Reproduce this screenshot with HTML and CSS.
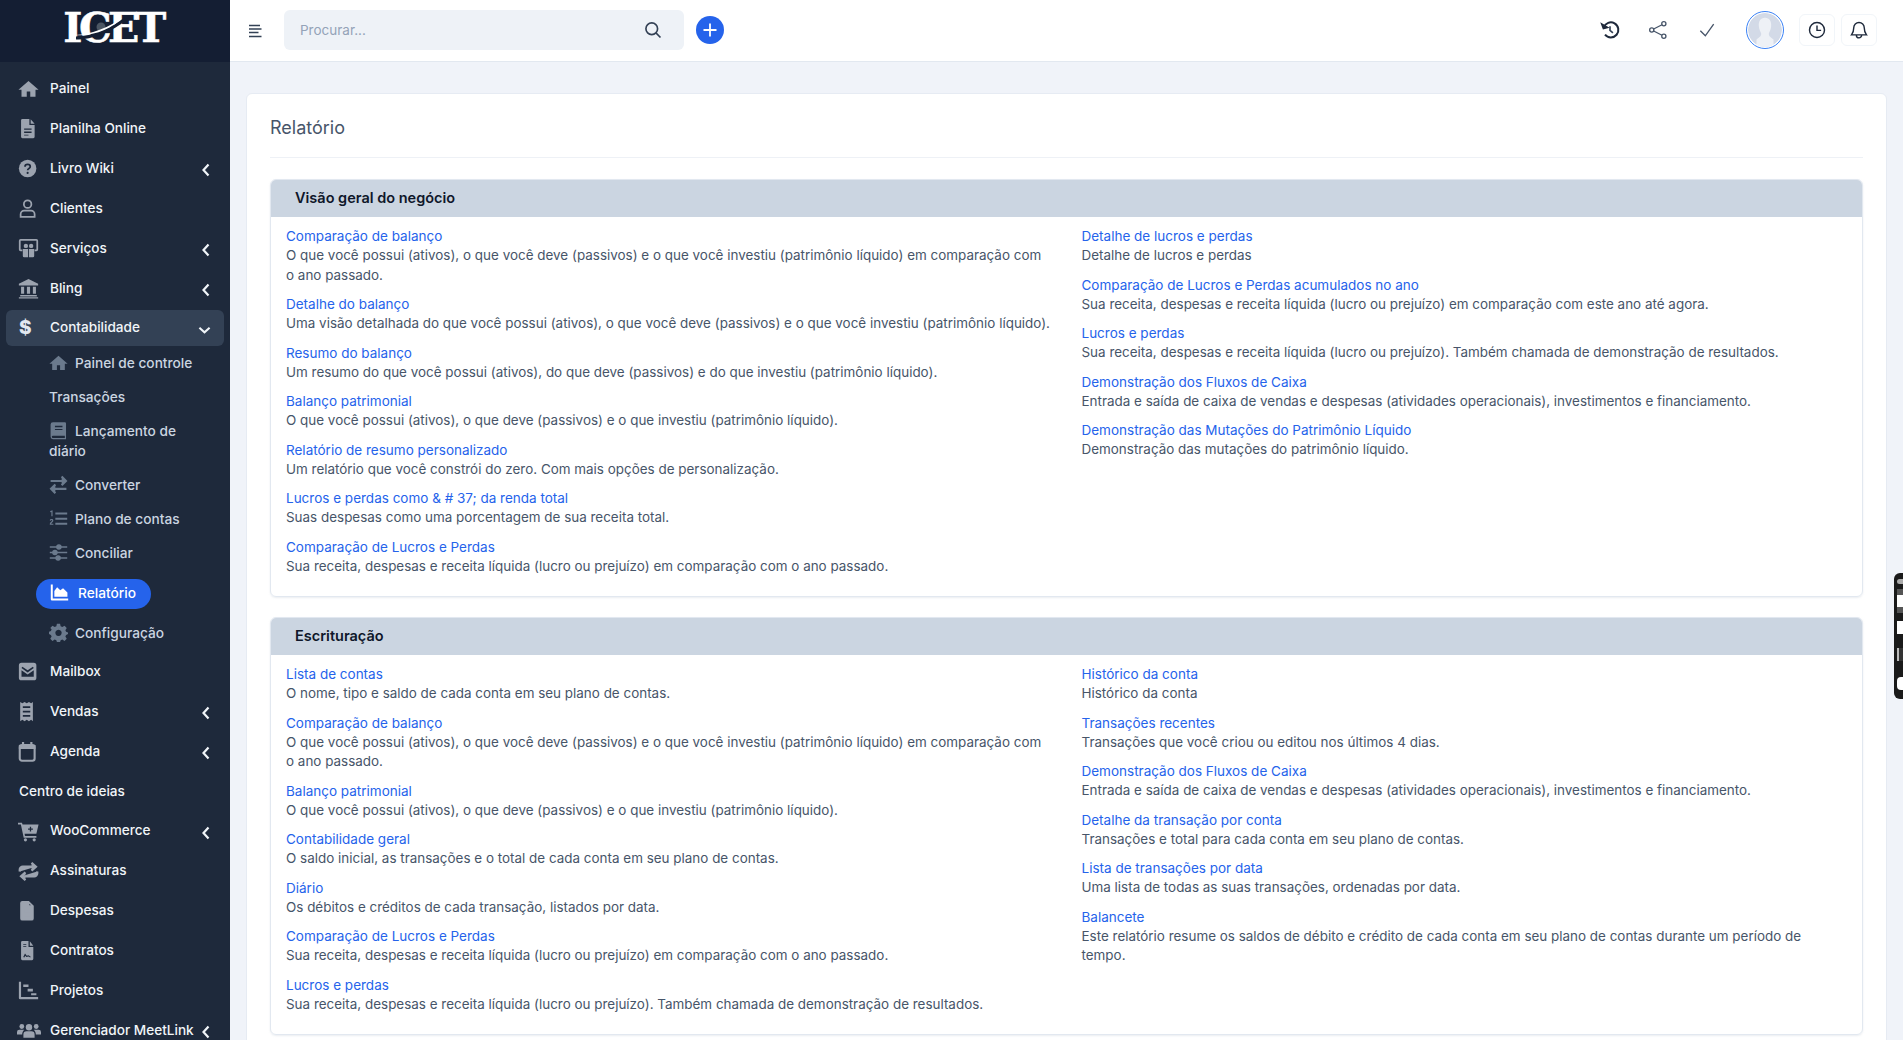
FILE: index.html
```html
<!DOCTYPE html>
<html lang="pt-BR">

<head>
  <meta charset="UTF-8" />
  <meta name="viewport" content="width=device-width, initial-scale=1.0" />
  <title>Relatório</title>
  <link rel="stylesheet" href="styles.css">
</head>

<body>
  <aside class="sidebar">
    <div class="logo">
      <span class="logo-text">ICET</span>
      <svg class="logo-orbit" viewBox="0 0 60 34"><circle cx="26" cy="18" r="4.500" fill="#4b5563"/><path d="M1 29C18 29 38 20 50 10" fill="none" stroke="#141e33" stroke-width="3"/><path d="M0 26C16 26 36 17 47 9C38 19 18 28 0 26Z" fill="#fff"/></svg>
    </div>
    <nav class="nav">
      <a class="nav-item"><svg class="nav-icon" viewBox="0 0 24 24"><path d="M12 3.500 0.500 13.500H4V21.500H10V15.500H14V21.500H20V13.500H23.500Z"/></svg>Painel</a>
      <a class="nav-item"><svg class="nav-icon" viewBox="0 0 24 24"><path fill-rule="evenodd" d="M5 1H13V8H19V21.500A1.500 1.500 0 0 1 17.500 23H5A1.500 1.500 0 0 1 3.500 21.500V2.500A1.500 1.500 0 0 1 5 1ZM14.500 1.500 19 6.500H14.500ZM7 12V13.500H15.500V12ZM7 15.500V17H15.500V15.500ZM7 19V20H12V19Z"/></svg>Planilha Online</a>
      <a class="nav-item"><svg class="nav-icon" viewBox="0 0 24 24"><circle cx="11" cy="12" r="10"/><path d="M8 10C8 6.500 14 6.500 14 10C14 12 11 12 11 14" fill="none" stroke="#1e293b" stroke-width="2"/><circle cx="11" cy="17" r="1.200" fill="#1e293b"/></svg>Livro Wiki<svg class="chevron" viewBox="0 0 8 14"><path d="M6.500 1.500 1.500 7l5 5.500"/></svg></a>
      <a class="nav-item"><svg class="nav-icon" viewBox="0 0 24 24"><circle cx="11" cy="7" r="4.300" fill="none" stroke="currentColor" stroke-width="2"/><path d="M3 21.500V18.500C3 16 5 14.500 7 14.500H15C17 14.500 19 16 19 18.500V21.500Z" fill="none" stroke="currentColor" stroke-width="2"/></svg>Clientes</a>
      <a class="nav-item"><svg class="nav-icon" viewBox="0 0 24 24"><path fill-rule="evenodd" d="M3 1H21A2 2 0 0 1 23 3V13A2 2 0 0 1 21 15H19V13H21V3H3V13H5V15H3A2 2 0 0 1 1 13V3A2 2 0 0 1 3 1Z"/><circle cx="9" cy="9" r="2.500"/><circle cx="15" cy="9" r="2.500"/><path d="M5.500 12.500H11.500V22H7A1.500 1.500 0 0 1 5.500 20.500ZM12.500 12.500H18.500V20.500A1.500 1.500 0 0 1 17 22H12.500Z"/></svg>Serviços<svg class="chevron" viewBox="0 0 8 14"><path d="M6.500 1.500 1.500 7l5 5.500"/></svg></a>
      <a class="nav-item"><svg class="nav-icon" viewBox="0 0 24 24"><path d="M12 1 23 6.500V8.500H1V6.500ZM3.500 10H7V18H3.500ZM10.200 10H13.800V18H10.200ZM17 10H20.500V18H17ZM2.500 19.500H21.500V21H2.500ZM1 22H23V23.500H1Z"/></svg>Bling<svg class="chevron" viewBox="0 0 8 14"><path d="M6.500 1.500 1.500 7l5 5.500"/></svg></a>
      <a class="nav-item is-open"><span class="nav-dollar">$</span>Contabilidade<svg class="chevron chevron-down" viewBox="0 0 14 8"><path d="M1.500 1.500 7 6.500l5.500-5"/></svg></a>
      <ul class="subnav">
        <li><a><svg class="sub-icon" viewBox="0 0 24 24"><path d="M12 3.500 0.500 13.500H4V21.500H10V15.500H14V21.500H20V13.500H23.500Z"/></svg>Painel de controle</a></li>
        <li><a>Transações</a></li>
        <li><a><svg class="sub-icon" viewBox="0 0 24 24"><path fill-rule="evenodd" d="M5 1.500H20A1.500 1.500 0 0 1 21.500 3V23H5A3 3 0 0 1 2 20V4.500A3 3 0 0 1 5 1.500ZM7.500 6V8H17V6ZM7.500 10V11.500H17V10ZM5 18.500A1.500 1.500 0 0 0 5 21.500H20V18.500Z"/></svg>Lançamento de diário</a></li>
        <li><a><svg class="sub-icon" viewBox="0 0 24 24" fill="none" stroke="currentColor" stroke-width="2.600"><path d="M2 8H21M16 2.500 21.500 8 16 13.500" transform="translate(0 -.5)"/><path d="M22 17H3M8 11.500 2.500 17 8 22.500" transform="translate(0 .5)"/></svg>Converter</a></li>
        <li><a><svg class="sub-icon" viewBox="0 0 24 24"><path d="M8 4.500H23V7H8ZM8 11H23V13.500H8ZM8 17.500H23V20H8ZM1.500 2.500 4.500 1.500V9H3V3.800L1.500 4.200ZM1 14.500C1 12 5.500 12 5.500 14.500C5.500 16 3 17.500 2.800 18.500H5.500V20H1V18.500C1.500 16.500 4 15.500 4 14.500C4 13.700 2.500 13.700 2.500 14.700Z"/></svg>Plano de contas</a></li>
        <li><a><svg class="sub-icon" viewBox="0 0 24 24" fill="none" stroke="currentColor" stroke-width="2"><path d="M1 5H10M15 5H23M1 12H5M10 12H23M1 19H9M14 19H23"/><circle cx="12.500" cy="5" r="2.500"/><circle cx="7.500" cy="12" r="2.500"/><circle cx="11.500" cy="19" r="2.500"/></svg>Conciliar</a></li>
        <li class="is-current"><a><svg class="sub-icon" viewBox="0 0 24 24"><path d="M1 2H3.500V19.500H23V22H2.500A1.500 1.500 0 0 1 1 20.500ZM5.500 17.500V10L9 5.500 13 9 16.500 6.500 22 12V17.500Z"/></svg>Relatório</a></li>
        <li><a><svg class="sub-icon" viewBox="0 0 24 24"><path fill-rule="evenodd" d="M10 1H14L14.700 4.200 16.800 5.100 19.600 3.400 22.400 6.200 20.700 9 21.600 11 24 12 24 14 21.600 15 20.700 17 22.400 19.800 19.600 22.600 16.800 20.900 14.700 21.800 14 24H10L9.300 21.800 7.200 20.900 4.400 22.600 1.600 19.800 3.300 17 2.400 15 0 14V11L2.400 10 3.300 8 1.600 6.200 4.400 3.400 7.200 5.100 9.300 4.200ZM12 8.500A4 4 0 1 0 12.010 8.500Z"/></svg>Configuração</a></li>
      </ul>
      <a class="nav-item"><svg class="nav-icon" viewBox="0 0 24 24"><path fill-rule="evenodd" d="M4 2H18A3 3 0 0 1 21 5V19A3 3 0 0 1 18 22H4A3 3 0 0 1 1 19V5A3 3 0 0 1 4 2ZM5 6.500 4 8 11 13 18 8 17 6.500 11 10.500ZM4 10.500V18H18V10.500L11 15.500Z"/></svg>Mailbox</a>
      <a class="nav-item"><svg class="nav-icon" viewBox="0 0 24 24"><path fill-rule="evenodd" d="M2.500 1 5 2.500 7.500 1 10 2.500 12.500 1 15 2.500 17 1V23L15 21.500 12.500 23 10 21.500 7.500 23 5 21.500 2.500 23ZM5.500 6V8H14V6ZM5.500 11V13H14V11ZM5.500 16V18H14V16Z"/></svg>Vendas<svg class="chevron" viewBox="0 0 8 14"><path d="M6.500 1.500 1.500 7l5 5.500"/></svg></a>
      <a class="nav-item"><svg class="nav-icon" viewBox="0 0 24 24"><rect x="2" y="4.500" width="17" height="18" rx="2.500" fill="none" stroke="currentColor" stroke-width="2.400"/><path d="M1 4.500H20V9H1ZM4.500 1H7V5H4.500ZM14 1H16.500V5H14Z"/></svg>Agenda<svg class="chevron" viewBox="0 0 8 14"><path d="M6.500 1.500 1.500 7l5 5.500"/></svg></a>
      <a class="nav-item nav-plain">Centro de ideias</a>
      <a class="nav-item"><svg class="nav-icon" viewBox="0 0 24 24"><path fill-rule="evenodd" d="M0 2H4.500L5.200 4H23.500L21 14.500H7.500L8 17H21V19H6.500L3.300 4H0ZM13.500 6.500V8.500H11.500V10H13.500V12H15V10H17V8.500H15V6.500Z"/><circle cx="8.500" cy="21.500" r="1.800"/><circle cx="18.500" cy="21.500" r="1.800"/></svg>WooCommerce<svg class="chevron" viewBox="0 0 8 14"><path d="M6.500 1.500 1.500 7l5 5.500"/></svg></a>
      <a class="nav-item"><svg class="nav-icon" viewBox="0 0 24 24" fill="none" stroke="currentColor" stroke-width="2.600"><path d="M2 12V10A3.500 3.500 0 0 1 5.500 6.500H20M15.500 2 20.500 6.500 15.500 11"/><path d="M22 12V14A3.500 3.500 0 0 1 18.500 17.500H4M8.500 13 3.500 17.500 8.500 22"/></svg>Assinaturas</a>
      <a class="nav-item"><svg class="nav-icon" viewBox="0 0 24 24" fill="none" stroke="currentColor" stroke-width="2"><path d="M5 2H12L17 7V21A1.500 1.500 0 0 1 15.500 22.500H5A1.500 1.500 0 0 1 3.500 21V3.500A1.500 1.500 0 0 1 5 2ZM12 2V7H17M7 12H14M7 15H14M7 18H14"/></svg>Despesas</a>
      <a class="nav-item"><svg class="nav-icon" viewBox="0 0 24 24"><path fill-rule="evenodd" d="M5 1H12V8H17.500V21.500A1.500 1.500 0 0 1 16 23H5A1.500 1.500 0 0 1 3.500 21.500V2.500A1.500 1.500 0 0 1 5 1ZM13.500 1.500 17.500 6.500H13.500ZM6 4.500V5.500H9.500V4.500ZM6 7V8H9.500V7ZM6 19.500 8 15.500 10 18 12 17.500 14.500 19 14 20 12 18.800 9.500 19.500 8.300 18 7.200 20Z"/></svg>Contratos</a>
      <a class="nav-item"><svg class="nav-icon" viewBox="0 0 24 24"><path d="M1 2H3.500V19.500H23V22H2.500A1.500 1.500 0 0 1 1 20.500ZM6 5H12V8H6ZM11 10H17V13H11ZM15 15H21V17.500H15Z"/></svg>Projetos</a>
      <a class="nav-item"><svg class="nav-icon nav-icon-wide" viewBox="0 0 30 24"><circle cx="6" cy="7" r="3"/><circle cx="24" cy="7" r="3"/><circle cx="15" cy="8" r="4"/><path d="M0 17V14A3 3 0 0 1 3 11H9C7 13 6.500 15 6.500 17ZM30 17V14A3 3 0 0 0 27 11H21C23 13 23.500 15 23.500 17ZM8 21V17A4 4 0 0 1 12 13H18A4 4 0 0 1 22 17V21Z"/></svg>Gerenciador MeetLink<svg class="chevron" viewBox="0 0 8 14"><path d="M6.500 1.500 1.500 7l5 5.500"/></svg></a>
    </nav>
  </aside>

  <div class="main">
    <header class="topbar">
      <button class="menu-btn" type="button"><svg viewBox="0 0 14 14"><path d="M1 1.500H12M1 5H13.500M1 8.500H10.500M1 12.500H13.500"/></svg></button>
      <div class="search">
        <input type="text" placeholder="Procurar..." />
        <svg viewBox="0 0 24 24"><circle cx="10.500" cy="10.500" r="7"/><path d="M15.500 15.500 21 21"/></svg>
      </div>
      <button class="add-btn" type="button"><svg viewBox="0 0 16 16"><path d="M8 1.500V14.500M1.500 8H14.500"/></svg></button>
      <div class="topbar-right">
        <a class="tool"><svg viewBox="0 0 24 24"><path d="M4.500 9A9 9 0 1 1 6 17.500" stroke="#1e293b" stroke-width="2.400"/><path d="M1.800 4.500 4 10.500 9.500 9Z" fill="#1e293b" stroke="#1e293b"/><path d="M12 7.500V12.500L15.500 15.500" stroke="#334155" stroke-width="2"/></svg></a>
        <a class="tool"><svg viewBox="0 0 24 24"><circle cx="4.500" cy="12" r="2.500"/><circle cx="19" cy="4.500" r="2.500"/><circle cx="19" cy="19.500" r="2.500"/><path d="M6.800 10.800 16.800 5.700M6.800 13.200 16.800 18.300"/></svg></a>
        <a class="tool"><svg viewBox="0 0 24 24"><path d="M4 13 10 19 20 5"/></svg></a>
        <div class="avatar"><svg viewBox="0 0 36 36"><circle cx="18" cy="18" r="18" fill="#d3dae7"/><path d="M18 5C23 5 25 9 24.500 14C24.200 18 22.500 20 22 22C22 25 25 26.500 27 28L27 36H9L9 28C11 26.500 14 25 14 22C13.500 20 11.800 18 11.500 14C11 9 13 5 18 5Z" fill="#eef1f6"/></svg></div>
        <button class="icon-btn" type="button"><svg viewBox="0 0 24 24"><circle cx="12" cy="12" r="10"/><path d="M12 6V12.500H17.500"/></svg></button>
        <button class="icon-btn" type="button"><svg viewBox="0 0 24 24"><path d="M12 2A7 7 0 0 0 5 9C5 14 4 16 2 18.500H22C20 16 19 14 19 9A7 7 0 0 0 12 2ZM8.500 19A3.500 3.500 0 0 0 15.500 19"/></svg></button>
      </div>
    </header>

    <main class="content">
      <div class="card">
        <h1 class="card-title">Relatório</h1>

        <section class="report-group">
          <h2>Visão geral do negócio</h2>
          <div class="report-cols">
            <div class="report-col">
              <div class="report-item"><a>Comparação de balanço</a><p>O que você possui (ativos), o que você deve (passivos) e o que você investiu (patrimônio líquido) em comparação com o&nbsp;ano passado.</p></div>
              <div class="report-item"><a>Detalhe do balanço</a><p>Uma visão detalhada do que você possui (ativos), o que você deve (passivos) e o que você investiu (patrimônio líquido).</p></div>
              <div class="report-item"><a>Resumo do balanço</a><p>Um resumo do que você possui (ativos), do que deve (passivos) e do que investiu (patrimônio líquido).</p></div>
              <div class="report-item"><a>Balanço patrimonial</a><p>O que você possui (ativos), o que deve (passivos) e o que investiu (patrimônio líquido).</p></div>
              <div class="report-item"><a>Relatório de resumo personalizado</a><p>Um relatório que você constrói do zero. Com mais opções de personalização.</p></div>
              <div class="report-item"><a>Lucros e perdas como &amp; # 37; da renda total</a><p>Suas despesas como uma porcentagem de sua receita total.</p></div>
              <div class="report-item"><a>Comparação de Lucros e Perdas</a><p>Sua receita, despesas e receita líquida (lucro ou prejuízo) em comparação com o ano passado.</p></div>
            </div>
            <div class="report-col">
              <div class="report-item"><a>Detalhe de lucros e perdas</a><p>Detalhe de lucros e perdas</p></div>
              <div class="report-item"><a>Comparação de Lucros e Perdas acumulados no ano</a><p>Sua receita, despesas e receita líquida (lucro ou prejuízo) em comparação com este ano até agora.</p></div>
              <div class="report-item"><a>Lucros e perdas</a><p>Sua receita, despesas e receita líquida (lucro ou prejuízo). Também chamada de demonstração de resultados.</p></div>
              <div class="report-item"><a>Demonstração dos Fluxos de Caixa</a><p>Entrada e saída de caixa de vendas e despesas (atividades operacionais), investimentos e financiamento.</p></div>
              <div class="report-item"><a>Demonstração das Mutações do Patrimônio Líquido</a><p>Demonstração das mutações do patrimônio líquido.</p></div>
            </div>
          </div>
        </section>

        <section class="report-group">
          <h2>Escrituração</h2>
          <div class="report-cols">
            <div class="report-col">
              <div class="report-item"><a>Lista de contas</a><p>O nome, tipo e saldo de cada conta em seu plano de contas.</p></div>
              <div class="report-item"><a>Comparação de balanço</a><p>O que você possui (ativos), o que você deve (passivos) e o que você investiu (patrimônio líquido) em comparação com o&nbsp;ano passado.</p></div>
              <div class="report-item"><a>Balanço patrimonial</a><p>O que você possui (ativos), o que deve (passivos) e o que investiu (patrimônio líquido).</p></div>
              <div class="report-item"><a>Contabilidade geral</a><p>O saldo inicial, as transações e o total de cada conta em seu plano de contas.</p></div>
              <div class="report-item"><a>Diário</a><p>Os débitos e créditos de cada transação, listados por data.</p></div>
              <div class="report-item"><a>Comparação de Lucros e Perdas</a><p>Sua receita, despesas e receita líquida (lucro ou prejuízo) em comparação com o ano passado.</p></div>
              <div class="report-item"><a>Lucros e perdas</a><p>Sua receita, despesas e receita líquida (lucro ou prejuízo). Também chamada de demonstração de resultados.</p></div>
            </div>
            <div class="report-col">
              <div class="report-item"><a>Histórico da conta</a><p>Histórico da conta</p></div>
              <div class="report-item"><a>Transações recentes</a><p>Transações que você criou ou editou nos últimos 4 dias.</p></div>
              <div class="report-item"><a>Demonstração dos Fluxos de Caixa</a><p>Entrada e saída de caixa de vendas e despesas (atividades operacionais), investimentos e financiamento.</p></div>
              <div class="report-item"><a>Detalhe da transação por conta</a><p>Transações e total para cada conta em seu plano de contas.</p></div>
              <div class="report-item"><a>Lista de transações por data</a><p>Uma lista de todas as suas transações, ordenadas por data.</p></div>
              <div class="report-item"><a>Balancete</a><p>Este relatório resume os saldos de débito e crédito de cada conta em seu plano de contas durante um período de tempo.</p></div>
            </div>
          </div>
        </section>
      </div>
    </main>
  </div>

  <!-- floating tools on the right edge -->
  <div class="side-tools">
    <span class="side-tool side-tool-a"></span>
    <span class="side-tool side-tool-b"></span>
    <span class="side-tool side-tool-c"></span>
    <span class="side-tool side-tool-d"></span>
    <span class="side-tool side-tool-e"></span>
  </div>
</body>

</html>
```

FILE: styles.css
```css
* {
  box-sizing: border-box;
  margin: 0;
  padding: 0;
}

html,
body {
  height: 100%;
  overflow: hidden;
}

body {
  display: flex;
  background-color: #f0f3f9;
  color: #475569;
  font-family: 'Inter', 'Liberation Sans', sans-serif;
  font-size: 13.500px;
  line-height: 19.500px;
}

/* sidebar */
.sidebar {
  flex: 0 0 230px;
  height: 1040px;
  overflow: hidden;
  background-color: #1e293b;
}

.logo {
  position: relative;
  display: flex;
  align-items: center;
  justify-content: center;
  height: 62px;
  background-color: #141e33;
}

.logo-text {
  color: #fff;
  font-family: 'DejaVu Serif', serif;
  font-size: 41px;
  font-weight: 700;
  letter-spacing: -3.500px;
  line-height: 1;
  margin-top: -6px;
  margin-right: 4px;
  -webkit-text-stroke: 0.500px #fff;
}

.logo-orbit {
  position: absolute;
  top: 9px;
  left: 75px;
  width: 60px;
  height: 34px;
}

.nav {
  display: flex;
  flex-direction: column;
  padding-top: 7px;
  font-size: 13.600px;
}

.nav-item {
  display: flex;
  align-items: center;
  height: 36px;
  margin: 1.950px 6px;
  padding: 0 14px 0 12px;
  border-radius: 6px;
  color: #f1f5f9;
  font-weight: 500;
  white-space: nowrap;
}

.nav-plain {
  padding-left: 13px;
}

.nav-item.is-open {
  background-color: #334155;
  margin-bottom: 0;
}

.nav-icon {
  flex: 0 0 21px;
  width: 21px;
  height: 21px;
  margin-right: 11px;
  color: #9ca3af;
  fill: currentColor;
}

.nav-icon-wide {
  flex: 0 0 24px;
  width: 24px;
  margin-left: -1px;
  margin-right: 9px;
}

.nav-dollar {
  flex: 0 0 20px;
  width: 20px;
  margin-right: 12px;
  padding-left: 1px;
  color: #e2e8f0;
  font-size: 19px;
  font-weight: 800;
}

.chevron {
  flex: 0 0 8px;
  width: 8px;
  height: 14px;
  margin-left: auto;
  margin-top: 3px;
  fill: none;
  stroke: #f1f5f9;
  stroke-width: 2.200;
}

.chevron-down {
  flex: 0 0 13px;
  width: 13px;
  height: 8px;
  margin-right: -1px;
  margin-top: 4px;
}

.subnav {
  list-style: none;
  margin-top: 1px;
  margin-bottom: 1px;
  font-size: 13.700px;
}

.subnav a {
  display: block;
  padding: 7.250px 30px 7.250px 49px;
  color: #cbd5e1;
  font-weight: 500;
}

.sub-icon {
  display: inline-block;
  width: 19px;
  height: 19px;
  margin: -4px 7px -4px 0;
  vertical-align: 0;
  color: #6b7a8d;
  fill: currentColor;
}

.subnav .is-current {
  width: 115px;
  height: 30px;
  margin: 8px 0 8px 36px;
  border-radius: 15px;
  background-color: #2563eb;
}

.subnav .is-current a {
  padding: 5px 0 5px 14px;
  color: #fff;
}

.subnav .is-current .sub-icon {
  color: #fff;
  margin-right: 9px;
}

/* top bar */
.main {
  flex: 1;
  min-width: 0;
  height: 1040px;
  overflow: hidden;
}

.topbar {
  display: flex;
  align-items: center;
  height: 62px;
  padding: 0 26px 1px 18px;
  border-bottom: 1px solid #e2e8f0;
  background-color: #fff;
}

.menu-btn {
  flex: 0 0 14px;
  width: 14px;
  height: 14px;
  margin-top: 1px;
  margin-right: 22px;
  border: none;
  background: none;
}

.menu-btn svg {
  display: block;
  width: 14px;
  height: 14px;
  fill: none;
  stroke: #334155;
  stroke-width: 1.500;
}

.search {
  display: flex;
  align-items: center;
  width: 400px;
  height: 40px;
  padding: 0 16px;
  border-radius: 6px;
  background-color: #eef2f7;
}

.search input {
  flex: 1;
  border: none;
  outline: none;
  background: none;
  color: #475569;
  font-family: inherit;
  font-size: 13.500px;
}

.search input::placeholder {
  color: #94a3b8;
}

.search svg {
  width: 20px;
  height: 20px;
  margin-right: 5px;
  fill: none;
  stroke: #334155;
  stroke-width: 2;
}

.add-btn {
  display: flex;
  align-items: center;
  justify-content: center;
  width: 28px;
  height: 28px;
  margin-left: 12px;
  border: none;
  border-radius: 50%;
  background-color: #2563eb;
}

.add-btn svg {
  width: 16px;
  height: 16px;
  fill: none;
  stroke: #fff;
  stroke-width: 1.800;
}

.topbar-right {
  display: flex;
  align-items: center;
  margin-left: auto;
}

.tool {
  display: flex;
  justify-content: center;
  width: 48.500px;
}

.tool svg {
  width: 20px;
  height: 20px;
  fill: none;
  stroke: #475569;
  stroke-width: 1.600;
}

.avatar {
  width: 38px;
  height: 38px;
  margin-left: 15px;
  margin-right: 15px;
  padding: 1px;
  border: 1px solid #3b82f6;
  border-radius: 50%;
  overflow: hidden;
}

.avatar svg {
  display: block;
  width: 34px;
  height: 34px;
  border-radius: 50%;
}

.icon-btn {
  display: flex;
  align-items: center;
  justify-content: center;
  width: 36px;
  height: 32px;
  margin-left: 6px;
  border: 1px solid #f1f5f9;
  border-radius: 6px;
  background-color: #fff;
}

.icon-btn:first-of-type {
  margin-left: 0;
}

.icon-btn svg {
  width: 18px;
  height: 18px;
  fill: none;
  stroke: #1e293b;
  stroke-width: 1.900;
}

/* report */
.content {
  padding: 31px 16px 0;
}

.card {
  padding: 0 23px;
  border: 1px solid #e6ebf3;
  border-radius: 6px;
  background-color: #fff;
}

.card-title {
  height: 64px;
  margin-bottom: 21px;
  padding-top: 22px;
  border-bottom: 1px solid #eef1f6;
  color: #475569;
  font-size: 18px;
  font-weight: 400;
  line-height: 24px;
}

.report-group {
  margin-bottom: 20px;
  padding-bottom: 10px;
  border: 1px solid #e2e8f0;
  border-radius: 6px;
  box-shadow: 0 1px 2px rgba(148, 163, 184, 0.2);
}

.report-group h2 {
  height: 36.500px;
  padding: 8px 24px;
  border-radius: 5px 5px 0 0;
  background-color: #cbd5e1;
  color: #0f172a;
  font-size: 14.500px;
  font-weight: 600;
  line-height: 20px;
}

.report-cols {
  display: grid;
  grid-template-columns: 1fr 1fr;
  padding-top: 10.500px;
}

.report-col {
  padding: 0 15px;
}

.report-col + .report-col {
  padding-right: 24px;
}

.report-item {
  margin-bottom: 10px;
}

.report-item a {
  display: block;
  color: #2563eb;
}

.report-item p {
  margin-top: -0.500px;
  font-size: 13.450px;
}

/* floating tools */
.side-tools {
  position: fixed;
  top: 573px;
  right: 0;
  display: flex;
  flex-direction: column;
  width: 9px;
  height: 126px;
  padding-left: 3px;
  border-radius: 6px 0 0 6px;
  background-color: #1a1a1a;
}

.side-tool {
  display: block;
  background-color: #fff;
}

.side-tool-a {
  height: 5px;
  margin-top: 6px;
  border-radius: 3px 0 0 3px;
  background-color: #aaa;
}

.side-tool-b {
  height: 12px;
  margin-top: 11px;
  box-shadow: 0 -6px 0 #555, 0 6px 0 #555;
}

.side-tool-c {
  height: 13px;
  margin-top: 14px;
}

.side-tool-d {
  height: 13px;
  margin-top: 14px;
  border-left: 2px solid #bbb;
  background-color: #333;
}

.side-tool-e {
  height: 13px;
  margin-top: 16px;
  border-radius: 4px 0 0 4px;
}
```
